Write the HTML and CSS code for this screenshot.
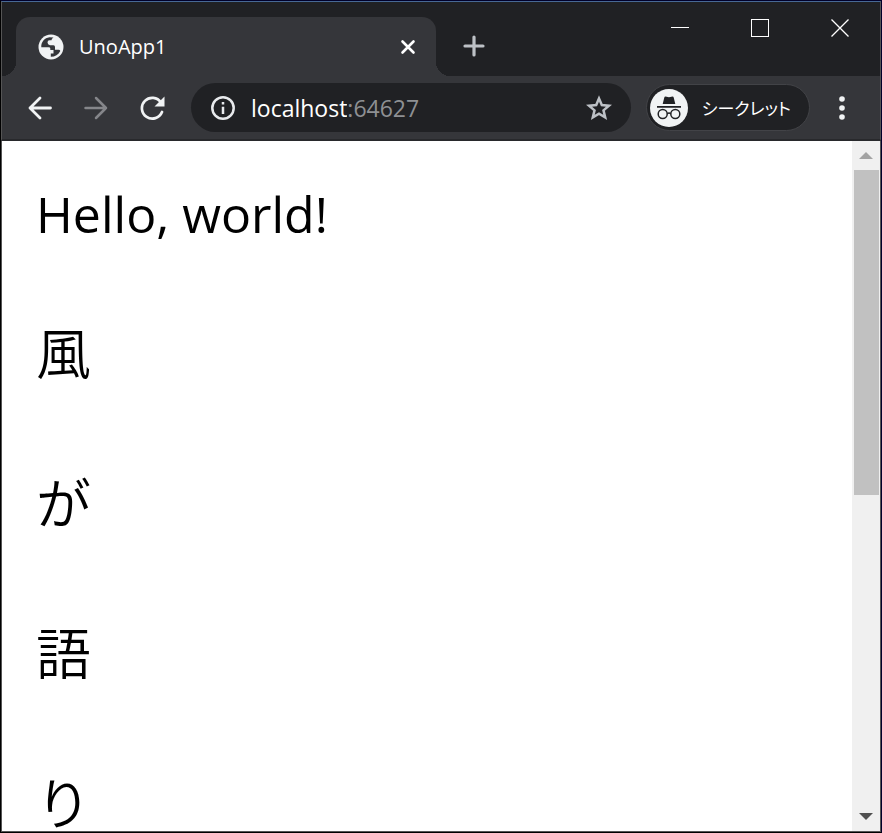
FILE: index.html
```html
<!DOCTYPE html>
<html lang="ja">
<head>
    <meta charset="UTF-8">
    <meta name="viewport" content="width=device-width, initial-scale=1.0">
    <title>UnoApp1</title>
    <link rel="stylesheet" href="styles.css">
</head>
<body>
    <div class="window">
        <!-- Title bar -->
        <header class="title-bar">
            <div class="tab">
                <svg class="favicon" width="26" height="26" viewBox="0 0 26 26" aria-hidden="true">
                    <circle cx="13" cy="13" r="12.5" fill="#f1f3f4"/>
                    <path d="M3.300 13.200C3 8 6.500 4 11.500 3.300L15.500 3.500Q13.500 4.500 13.500 6.300H11.500Q9.500 6.300 9.500 8.600T12 11.300H15.500Q17 11.300 17 13V15.700H20.500Q22 15.700 22.300 17C20.500 20.800 17 22.700 12.800 22.800V19.500H15.500V16H12.300V14.500Q12.300 13.200 10.500 13.200z" fill="#35363a"/>
                </svg>
                <span class="tab-title">UnoApp1</span>
                <button class="icon-btn tab-close" aria-label="Close tab">
                    <svg width="16" height="16" viewBox="0 0 16 16" stroke="#fff" stroke-width="2.6" stroke-linecap="round"><path d="M2.500 2.500l11 11M13.500 2.500l-11 11"/></svg>
                </button>
            </div>
            <button class="icon-btn new-tab" aria-label="New tab">
                <svg width="22" height="22" viewBox="0 0 22 22" stroke="#bdc1c6" stroke-width="3.200" stroke-linecap="round"><path d="M11 2v18M2 11h18"/></svg>
            </button>
            <div class="window-buttons">
                <button class="icon-btn" aria-label="Minimize">
                    <svg width="18" height="18" viewBox="0 0 18 18" stroke="#fff"><path d="M0 8.500h18"/></svg>
                </button>
                <button class="icon-btn" aria-label="Maximize">
                    <svg width="18" height="18" viewBox="0 0 18 18" stroke="#fff" fill="none"><rect x=".5" y=".5" width="17" height="17"/></svg>
                </button>
                <button class="icon-btn" aria-label="Close">
                    <svg width="18" height="18" viewBox="0 0 18 18" stroke="#fff" stroke-width="1.300"><path d="M.5 .5l17 17M17.500 .5l-17 17"/></svg>
                </button>
            </div>
        </header>

        <!-- Toolbar -->
        <nav class="toolbar">
            <div class="nav-buttons">
                <button class="icon-btn" aria-label="Back">
                    <svg width="24" height="24" viewBox="0 0 24 24" fill="none" stroke="#f1f3f4" stroke-width="2.800" stroke-linecap="round" stroke-linejoin="round"><path d="M22.500 12H2M12 2L2 12l10 10"/></svg>
                </button>
                <button class="icon-btn" aria-label="Forward" disabled>
                    <svg width="24" height="24" viewBox="0 0 24 24" fill="none" stroke="#85868a" stroke-width="2.500" stroke-linecap="round" stroke-linejoin="round"><path d="M1.500 12H22M12 2l10 10-10 10"/></svg>
                </button>
                <button class="icon-btn" aria-label="Reload">
                    <svg width="26" height="26" viewBox="0 0 26 26" fill="none" stroke="#f1f3f4" stroke-width="2.700" stroke-linecap="round"><path d="M22 7.500A10.400 10.400 0 1 0 23 17"/><path d="M25.500 1.500v10H15.500z" fill="#f1f3f4" stroke="none"/></svg>
                </button>
            </div>
            <div class="address-bar">
                <button class="icon-btn" aria-label="Site information">
                    <svg width="24" height="24" viewBox="0 0 24 24" fill="none" stroke="#e8eaed" stroke-width="2.500"><circle cx="12" cy="12" r="10.700"/><path d="M12 10.800V18M12 6v2.600"/></svg>
                </button>
                <label class="address">
                    <input type="text" class="host" value="localhost" aria-label="Address" spellcheck="false">
                    <span class="port">:64627</span>
                </label>
                <button class="icon-btn" aria-label="Bookmark this page">
                    <svg width="26" height="26" viewBox="0 0 26 26" fill="none" stroke="#bdc1c6" stroke-width="2.500"><path d="M13 3.500l2.800 6.600 7.200.6-5.500 4.700 1.700 7-6.200-3.700-6.200 3.700 1.700-7L3 10.700l7.200-.6z"/></svg>
                </button>
            </div>
            <button class="incognito">
                <svg width="38" height="38" viewBox="0 0 38 38" aria-hidden="true">
                    <circle cx="19" cy="19" r="19" fill="#f1f3f4"/>
                    <path d="M15.500 7.500l3.500.8 3.500-.8c.7 0 1 .3 1.200.9L25.300 15H12.700l1.600-6.600c.2-.6.500-.9 1.200-.9zM7 17h24v1.700H7z" fill="#202124"/>
                    <g fill="none" stroke="#202124" stroke-width="1.500"><circle cx="12.700" cy="25" r="4.500"/><circle cx="25.300" cy="25" r="4.500"/><path d="M17.200 24.600q1.800-1 3.600 0"/></g>
                </svg>
                <span>シークレット</span>
            </button>
            <button class="icon-btn menu" aria-label="Menu">
                <svg width="6" height="24" viewBox="0 0 6 24" fill="#f1f3f4"><circle cx="3" cy="3" r="2.800"/><circle cx="3" cy="12" r="2.800"/><circle cx="3" cy="21" r="2.800"/></svg>
            </button>
        </nav>

        <!-- Page -->
        <div class="viewport">
            <main class="page">
                <p class="hello">Hello, world!</p>
                <p>風</p>
                <p>が</p>
                <p>語</p>
                <p>り</p>
            </main>
            <div class="scrollbar">
                <button class="icon-btn" aria-label="Scroll up">
                    <svg width="14" height="7" viewBox="0 0 14 7" fill="#a3a3a3"><path d="M0 7l7-7 7 7z"/></svg>
                </button>
                <div class="track"><div class="thumb"></div></div>
                <button class="icon-btn" aria-label="Scroll down">
                    <svg width="14" height="7" viewBox="0 0 14 7" fill="#505050"><path d="M0 0h14L7 7z"/></svg>
                </button>
            </div>
        </div>
    </div>
</body>
</html>
```
FILE: styles.css
```css
* {
    box-sizing: border-box;
}

body {
    font-family: "Open Sans", "Noto Sans CJK JP", sans-serif;
    background-color: #000;
    margin: 0;
}

.window {
    display: flex;
    flex-direction: column;
    height: 100vh;
    border: 1px solid #00002a;
    border-left-color: #000;
    border-bottom-color: #000;
    overflow: hidden;
}

button {
    font: inherit;
    color: inherit;
    background: none;
    border: none;
    padding: 0;
}

.icon-btn {
    display: flex;
    align-items: center;
    justify-content: center;
    flex-shrink: 0;
}

.title-bar {
    display: flex;
    align-items: flex-end;
    height: 75px;
    background-color: #202124;
    border: 1px solid #555;
    border-top-color: #476894;
    border-bottom: none;
}

.tab {
    position: relative;
    display: flex;
    align-items: center;
    flex: 0 1 420px;
    height: 59px;
    margin-left: 14px;
    padding: 0 20px 0 22px;
    background-color: #35363a;
    border-radius: 14px 14px 0 0;
    color: #fff;
}

/* Flared feet of the active tab */
.tab::before,
.tab::after {
    content: "";
    position: absolute;
    bottom: 0;
    width: 14px;
    height: 14px;
}

.tab::before {
    right: 100%;
    background: radial-gradient(circle at 0 0, transparent 14px, #35363a 14px);
}

.tab::after {
    left: 100%;
    background: radial-gradient(circle at 100% 0, transparent 14px, #35363a 14px);
}

.tab-title {
    flex: 1;
    margin-left: 15px;
    font-size: 20px;
}

.new-tab {
    width: 48px;
    height: 60px;
    margin-left: 14px;
}

.window-buttons {
    display: flex;
    align-self: flex-start;
    margin-left: auto;
}

.window-buttons .icon-btn {
    width: 80px;
    height: 52px;
}

.toolbar {
    display: flex;
    align-items: center;
    height: 65px;
    padding: 0 26px 0 10px;
    background-color: #35363a;
    border: 1px solid #555;
    border-top: none;
    border-bottom: 2px solid #28292c;
}

.nav-buttons {
    display: flex;
}

.nav-buttons .icon-btn {
    width: 56px;
    height: 48px;
}

.address-bar {
    display: flex;
    align-items: center;
    flex: 1;
    height: 49px;
    margin-left: 11px;
    padding: 0 19px 0 20px;
    background-color: #202124;
    border-radius: 25px;
}

.address {
    display: flex;
    align-items: center;
    flex: 1;
    margin-left: 16px;
    font-size: 23px;
    color: #8e9093;
}

.host {
    field-sizing: content;
    font: inherit;
    color: #fff;
    background: none;
    border: none;
    padding: 0;
    outline: none;
}

.incognito {
    display: flex;
    align-items: center;
    gap: 14px;
    height: 47px;
    margin-left: 15px;
    padding: 0 18px 0 3px;
    background-color: #202124;
    border: 1px solid #424347;
    border-radius: 24px;
    color: #fff;
    font-size: 17px;
    font-feature-settings: "palt";
    white-space: nowrap;
}

.menu {
    width: 24px;
    height: 48px;
    margin-left: 20px;
}

.viewport {
    display: flex;
    flex: 1;
    min-height: 0;
    background-color: #fff;
    border: 1px solid #555;
    border-top: none;
}

.page {
    flex: 1;
    padding: 0 34px;
    overflow: hidden;
}

.page p {
    margin: 0 0 100px;
    font-size: 55px;
    font-weight: 350;
    line-height: 50px;
}

.page .hello {
    margin: 48px 0 89px;
    font-size: 50px;
    font-weight: 400;
}

.scrollbar {
    display: flex;
    flex-direction: column;
    width: 28px;
    background-color: #f0f0f0;
}

.scrollbar .icon-btn {
    height: 29px;
}

.track {
    flex: 1;
    padding: 0 1px 0 2px;
}

.thumb {
    height: 325px;
    background-color: #c1c1c1;
}
```
